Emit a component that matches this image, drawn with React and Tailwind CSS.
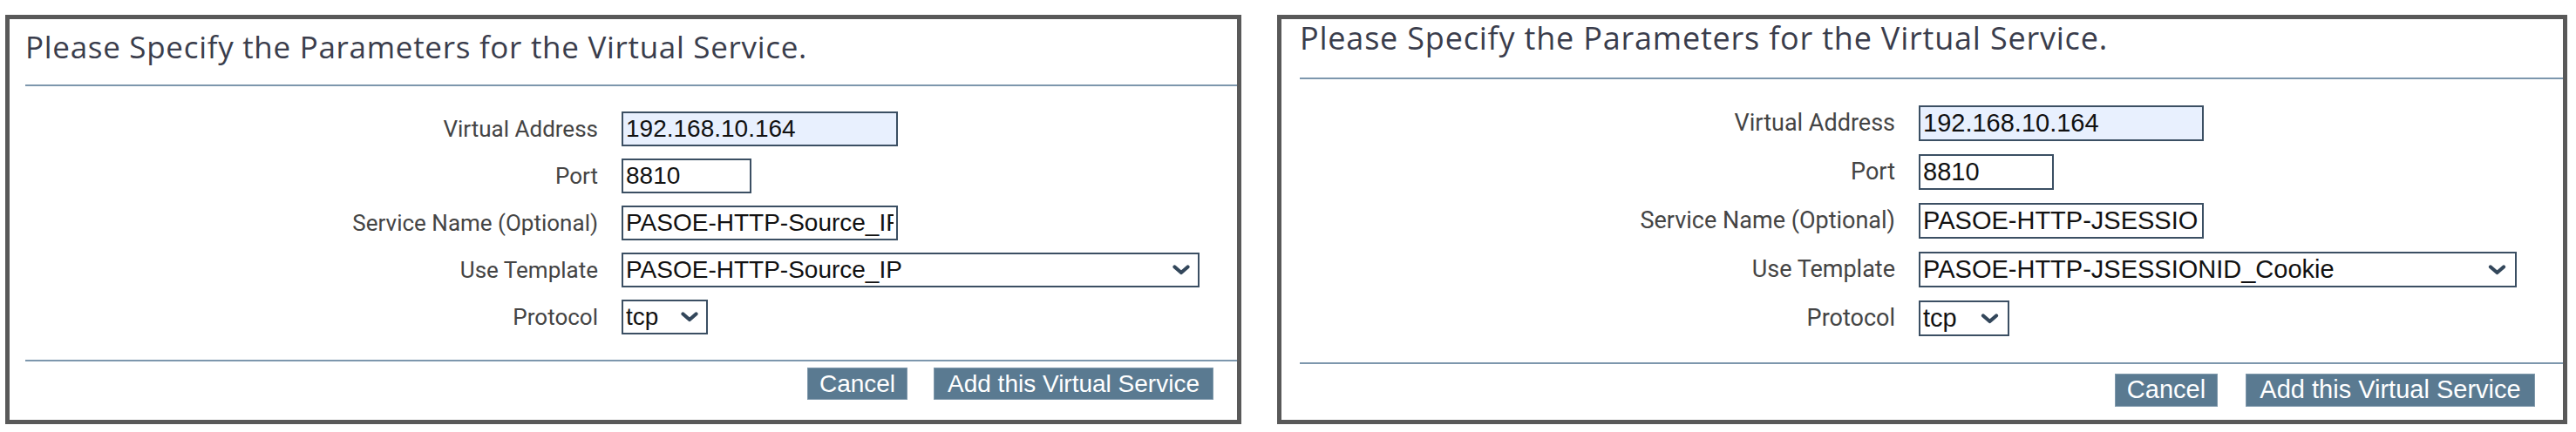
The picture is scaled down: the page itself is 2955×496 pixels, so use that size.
import React from 'react';

const LEFT = {
  panel: 'w-[1418px] h-[470px]',
  title: 'h-[75px] pt-[14px] pl-[18px] text-[35px] tracking-[0.7px]',
  rule: 'ml-[18px]',
  grid: 'grid-cols-[675px_auto] gap-x-[27px] gap-y-[14px] mt-[29px]',
  label: 'text-[26px] h-[40px]',
  field: 'h-[40px] text-[28px]',
  widths: { address: 'w-[317px]', port: 'w-[149px]', name: 'w-[317px]', template: 'w-[663px]', protocol: 'w-[99px]' },
  rule2: 'ml-[18px] mt-[29px]',
  buttons: 'mt-[7px] pr-[27px] gap-[30px]',
  btn: 'h-[37px] text-[28px]',
  cancel: 'w-[115px]',
  add: 'w-[321px]',
  chevron: 'w-[20px] h-[12px] mr-[9px]',
  template: 'PASOE-HTTP-Source_IP',
};

const RIGHT = {
  panel: 'w-[1480px] h-[470px]',
  title: 'h-[67px] pt-[4px] pl-[21px] text-[36px] tracking-[0.8px]',
  rule: 'ml-[21px]',
  grid: 'grid-cols-[704px_auto] gap-x-[27px] gap-y-[15px] mt-[30px]',
  label: 'text-[27px] h-[41px]',
  field: 'h-[41px] text-[29px]',
  widths: { address: 'w-[327px]', port: 'w-[155px]', name: 'w-[327px]', template: 'w-[686px]', protocol: 'w-[104px]' },
  rule2: 'ml-[21px] mt-[30px]',
  buttons: 'mt-[11px] pr-[32px] gap-[32px]',
  btn: 'h-[38px] text-[29px]',
  cancel: 'w-[118px]',
  add: 'w-[332px]',
  chevron: 'w-[21px] h-[12px] mr-[10px]',
  template: 'PASOE-HTTP-JSESSIONID_Cookie',
};

function Chevron({ className }) {
  return (
    <svg viewBox="0 0 20 12" className={className} fill="none">
      <path d="M2.5 2.5 L10 9 L17.5 2.5" stroke="#33475b" strokeWidth="4.2" strokeLinecap="round" strokeLinejoin="round" />
    </svg>
  );
}

function Label({ cfg, children }) {
  return (
    <div className={`flex items-center justify-end text-[#444] font-['Roboto',sans-serif] ${cfg.label}`}>
      {children}
    </div>
  );
}

function TextField({ cfg, width, value, bg = 'bg-white' }) {
  return (
    <input
      type="text"
      readOnly
      defaultValue={value}
      className={`block border-2 border-[#3b4f63] ${bg} px-[3px] py-0 text-[#111] font-['Liberation_Sans',Arial,sans-serif] outline-none ${cfg.field} ${width}`}
    />
  );
}

function SelectBox({ cfg, width, value }) {
  return (
    <div
      className={`flex items-center justify-between border-2 border-[#3b4f63] bg-white pl-[3px] text-[#111] font-['Liberation_Sans',Arial,sans-serif] ${cfg.field} ${width}`}
    >
      <span className="whitespace-nowrap">{value}</span>
      <Chevron className={cfg.chevron} />
    </div>
  );
}

function Panel({ cfg }) {
  return (
    <div className={`border-[5px] border-[#595959] bg-white flex flex-col ${cfg.panel}`}>
      <div className={`leading-none text-[#3a3d4c] font-['Open_Sans',sans-serif] whitespace-nowrap ${cfg.title}`}>
        Please Specify the Parameters for the Virtual Service.
      </div>
      <div className={`h-[2px] bg-[#7d97ad] ${cfg.rule}`} />

      <div className={`grid items-center ${cfg.grid}`}>
        <Label cfg={cfg}>Virtual Address</Label>
        <TextField cfg={cfg} width={cfg.widths.address} value="192.168.10.164" bg="bg-[#e8f0fe]" />

        <Label cfg={cfg}>Port</Label>
        <TextField cfg={cfg} width={cfg.widths.port} value="8810" />

        <Label cfg={cfg}>Service Name (Optional)</Label>
        <TextField cfg={cfg} width={cfg.widths.name} value={cfg.template} />

        <Label cfg={cfg}>Use Template</Label>
        <SelectBox cfg={cfg} width={cfg.widths.template} value={cfg.template} />

        <Label cfg={cfg}>Protocol</Label>
        <SelectBox cfg={cfg} width={cfg.widths.protocol} value="tcp" />
      </div>

      <div className={`h-[2px] bg-[#7d97ad] ${cfg.rule2}`} />

      <div className={`flex justify-end ${cfg.buttons}`}>
        <button
          type="button"
          className={`flex items-center justify-center bg-[#5a7a91] border border-[#7f98ab] text-white font-['Liberation_Sans',Arial,sans-serif] ${cfg.btn} ${cfg.cancel}`}
        >
          Cancel
        </button>
        <button
          type="button"
          className={`flex items-center justify-center bg-[#5a7a91] border border-[#7f98ab] text-white font-['Liberation_Sans',Arial,sans-serif] whitespace-nowrap ${cfg.btn} ${cfg.add}`}
        >
          Add this Virtual Service
        </button>
      </div>
    </div>
  );
}

export default function App() {
  return (
    <div className="w-[2955px] h-[496px] bg-white flex items-start gap-[41px] pl-[6px] pt-[17px]">
      <Panel cfg={LEFT} />
      <Panel cfg={RIGHT} />
    </div>
  );
}
